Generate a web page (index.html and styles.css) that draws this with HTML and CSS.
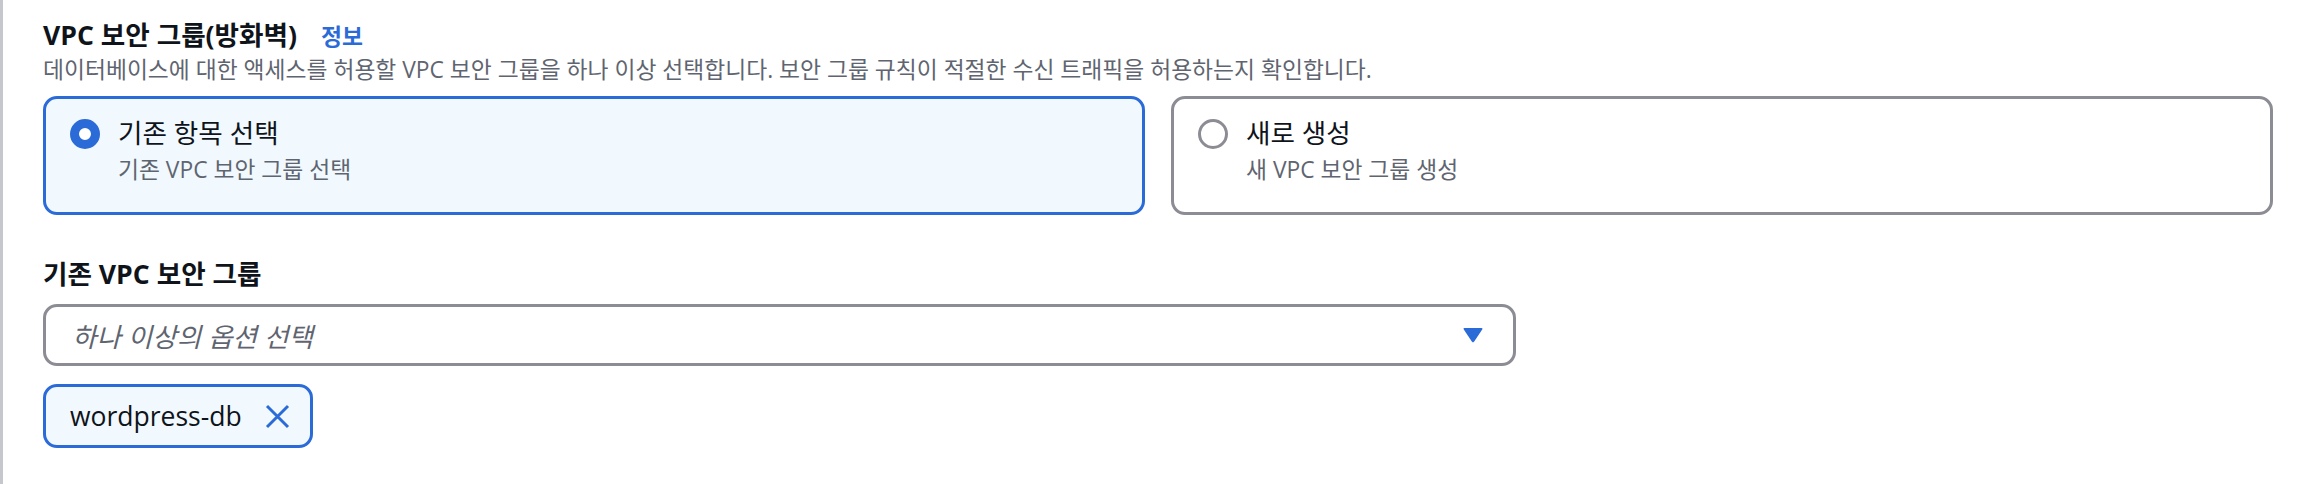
FILE: index.html
```html
<!DOCTYPE html>
<html lang="ko">
<head>
<meta charset="utf-8">
<title>VPC 보안 그룹</title>
<link rel="stylesheet" href="styles.css">
</head>
<body>
<div class="page">
  <div class="field-head">
    <span class="field-label">VPC 보안 그룹(방화벽)</span>
    <a class="info-link" href="#">정보</a>
  </div>
  <div class="field-desc">데이터베이스에 대한 액세스를 허용할 VPC 보안 그룹을 하나 이상 선택합니다. 보안 그룹 규칙이 적절한 수신 트래픽을 허용하는지 확인합니다.</div>

  <div class="tiles">
    <div class="tile tile-selected">
      <span class="radio radio-on"></span>
      <div class="tile-text">
        <div class="tile-title">기존 항목 선택</div>
        <div class="tile-desc">기존 VPC 보안 그룹 선택</div>
      </div>
    </div>
    <div class="tile">
      <span class="radio"></span>
      <div class="tile-text">
        <div class="tile-title">새로 생성</div>
        <div class="tile-desc">새 VPC 보안 그룹 생성</div>
      </div>
    </div>
  </div>

  <div class="field-label sub-label">기존 VPC 보안 그룹</div>
  <div class="select">
    <span class="placeholder">하나 이상의 옵션 선택</span>
    <svg class="caret" width="20" height="16" viewBox="0 0 20 16"><path d="M1.5 1 H18.5 Q20 1 19.2 2.4 L11.2 14.6 Q10 16.2 8.8 14.6 L0.8 2.4 Q0 1 1.5 1 Z" fill="#2b6bd8"/></svg>
  </div>

  <div class="token">
    <span class="token-text">wordpress-db</span>
    <svg class="token-x" width="25" height="25" viewBox="0 0 25 25"><path d="M2 2 L23 23 M23 2 L2 23" stroke="#2b6bd8" stroke-width="3" fill="none"/></svg>
  </div>
</div>
</body>
</html>
```

FILE: styles.css
```css
html, body {
  margin: 0;
  padding: 0;
  background: #ffffff;
}

body {
  font-family: "Open Sans", "Noto Sans CJK KR", sans-serif;
  color: #0f141a;
}

.page {
  box-sizing: border-box;
  min-height: 484px;
  border-left: 3px solid #c6c6cd;
  padding: 15px 37px 0 40px;
}

.field-head {
  display: flex;
  align-items: baseline;
  gap: 24px;
  height: 40px;
  line-height: 40px;
}

.field-label {
  font-size: 26.6px;
  font-weight: 700;
  line-height: 40px;
}

.info-link {
  font-size: 22.8px;
  font-weight: 700;
  color: #2b6bd8;
  text-decoration: none;
}

.field-desc {
  margin-top: 1px;
  font-size: 22.8px;
  line-height: 28px;
  color: #5f6570;
}

.tiles {
  margin-top: 12px;
  display: grid;
  grid-template-columns: 1fr 1fr;
  gap: 26px;
}

.tile {
  box-sizing: border-box;
  height: 119px;
  border: 3px solid #8c8c94;
  border-radius: 14px;
  padding: 15px 28px 26px 24px;
  display: flex;
  align-items: flex-start;
  gap: 18px;
  background: #ffffff;
}

.tile-selected {
  border-color: #2b6bd8;
  background: #f1f9fe;
}

.radio {
  box-sizing: border-box;
  flex: none;
  width: 30px;
  height: 30px;
  margin-top: 5px;
  border-radius: 50%;
  border: 3.5px solid #8c8c94;
  background: #ffffff;
}

.radio-on {
  border: 9px solid #2b6bd8;
}

.tile-title {
  font-size: 26.6px;
  line-height: 38px;
}

.tile-desc {
  margin-top: 4px;
  font-size: 22.8px;
  line-height: 28px;
  color: #5f6570;
}

.sub-label {
  margin-top: 40px;
  line-height: 38px;
}

.select {
  box-sizing: border-box;
  margin-top: 11px;
  width: 1473px;
  height: 62px;
  border: 3px solid #8c8c94;
  border-radius: 14px;
  padding: 0 30px 0 26px;
  display: flex;
  align-items: center;
  justify-content: space-between;
}

.placeholder {
  font-size: 26.6px;
  font-style: italic;
  color: #5f6570;
}

.caret {
  display: block;
}

.token {
  box-sizing: border-box;
  margin-top: 18px;
  width: 270px;
  height: 64px;
  border: 3px solid #2b6bd8;
  border-radius: 14px;
  background: #f1f9fe;
  padding: 0 19px 0 24px;
  display: flex;
  align-items: center;
  gap: 23px;
}

.token-text {
  font-size: 26.5px;
  white-space: nowrap;
}

.token-x {
  display: block;
  flex: none;
}
```
